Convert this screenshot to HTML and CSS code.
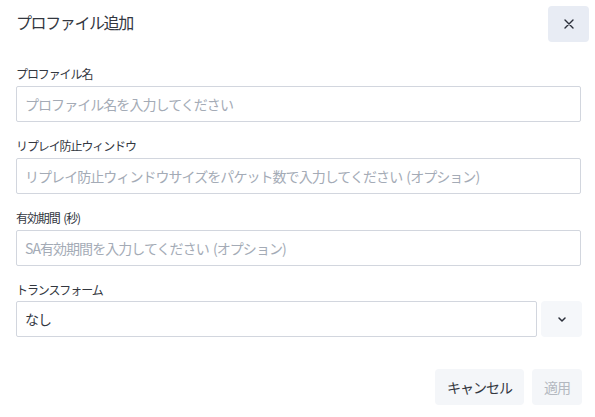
FILE: index.html
```html
<!DOCTYPE html>
<html lang="ja">
<head>
<meta charset="utf-8">
<link rel="stylesheet" href="styles.css">
</head>
<body>
<div class="dialog">
  <div class="header">
    <h1 class="title">プロファイル追加</h1>
    <button class="close" aria-label="閉じる">
      <svg width="10" height="10" viewBox="0 0 10 10"><path d="M1 1L9 9M9 1L1 9" stroke="#2b2f3a" stroke-width="1.4" stroke-linecap="round"/></svg>
    </button>
  </div>
  <div class="field">
    <label class="label">プロファイル名</label>
    <input class="input" placeholder="プロファイル名を入力してください">
  </div>
  <div class="field">
    <label class="label">リプレイ防止ウィンドウ</label>
    <input class="input" placeholder="リプレイ防止ウィンドウサイズをパケット数で入力してください (オプション)">
  </div>
  <div class="field">
    <label class="label">有効期間 (秒)</label>
    <input class="input" placeholder="SA有効期間を入力してください (オプション)">
  </div>
  <div class="field">
    <label class="label">トランスフォーム</label>
    <div class="select-row">
      <div class="select">なし</div>
      <button class="chev" aria-label="開く">
        <svg width="8" height="5" viewBox="0 0 8 5"><path d="M1 1L4 4L7 1" fill="none" stroke="#2b2f3a" stroke-width="1.5" stroke-linecap="round" stroke-linejoin="round"/></svg>
      </button>
    </div>
  </div>
  <div class="footer">
    <button class="btn">キャンセル</button>
    <button class="btn disabled">適用</button>
  </div>
</div>
</body>
</html>
```
FILE: styles.css
```css
* { box-sizing: border-box; }
html, body { margin: 0; padding: 0; background: #fff; }
body {
  font-family: "Noto Sans CJK JP", "Noto Sans", sans-serif;
  color: #33373f;
}
.dialog {
  width: 595px;
  height: 417px;
  padding: 6px 14px 0 16px;
  display: flex;
  flex-direction: column;
}
.header {
  display: flex;
  justify-content: space-between;
  align-items: center;
  height: 36px;
  margin-bottom: 24px;
  margin-right: -8px;
}
.title {
  margin: 0;
  font-size: 16px;
  font-weight: 400;
  letter-spacing: -1.4px;
  color: #33373f;
  line-height: 24px;
  margin-top: -4px;
}
.close {
  width: 41px;
  height: 36px;
  border: 0;
  border-radius: 4px;
  background: #e8ecf4;
  display: flex;
  align-items: center;
  justify-content: center;
  padding: 0;
}
.field {
  display: flex;
  flex-direction: column;
  margin-bottom: 16px;
}
.label {
  font-size: 12px;
  line-height: 16px;
  letter-spacing: -1.1px;
  word-spacing: 2px;
  color: #33373f;
  margin-bottom: 4px;
}
.input, .select {
  height: 36px;
  border: 1px solid #d2d6de;
  border-radius: 2px;
  padding: 0 8px;
  font-family: inherit;
  font-size: 14px;
  letter-spacing: -0.95px;
  word-spacing: 2px;
  color: #33373f;
  outline: none;
  background: #fff;
  width: 100%;
}
.input::placeholder { color: #a4abb6; }
.select-row {
  display: flex;
  gap: 4px;
  margin-top: -1px;
}
.select {
  flex: 1;
  display: flex;
  align-items: center;
}
.chev {
  width: 41px;
  height: 36px;
  border: 0;
  border-radius: 4px;
  background: #f5f7fa;
  display: flex;
  align-items: center;
  justify-content: center;
  padding: 0;
  margin-right: -1px;
}
.footer {
  display: flex;
  justify-content: flex-end;
  gap: 8px;
  margin-top: 16px;
  margin-right: -1px;
}
.btn {
  height: 36px;
  border: 0;
  border-radius: 4px;
  background: #f4f6f9;
  font-family: inherit;
  font-size: 14px;
  letter-spacing: -1px;
  color: #33373f;
  padding: 0 12px;
}
.btn.disabled {
  color: #b3b8c0;
  width: 50px;
  padding: 0;
}
```
